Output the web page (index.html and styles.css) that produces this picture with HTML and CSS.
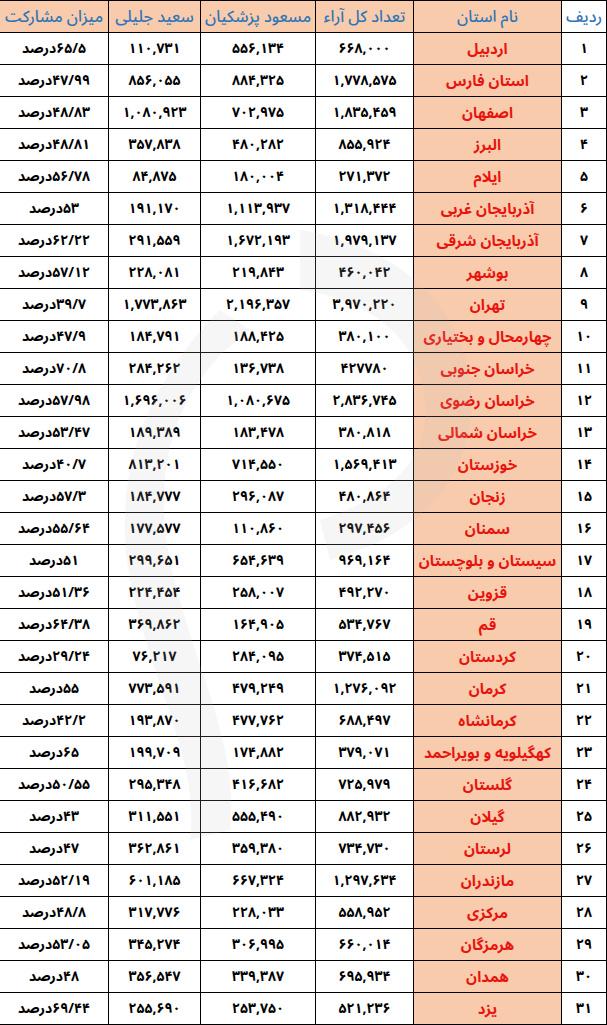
FILE: index.html
```html
<!DOCTYPE html>
<html lang="fa" dir="rtl">
<head>
<meta charset="utf-8">
<title>نتایج انتخابات به تفکیک استان</title>
<link rel="stylesheet" href="styles.css">
</head>
<body>
<div class="wrap">
<table class="results">
<colgroup>
<col class="c-idx"><col class="c-name"><col class="c-total"><col class="c-p"><col class="c-j"><col class="c-part">
</colgroup>
<thead>
<tr><th class="h-idx">ردیف</th><th>نام استان</th><th>تعداد کل آراء</th><th>مسعود پزشکیان</th><th>سعید جلیلی</th><th>میزان مشارکت</th></tr>
</thead>
<tbody>
<tr><td>۱</td><td class="name">اردبیل</td><td>۶۶۸,۰۰۰</td><td>۵۵۶,۱۳۴</td><td>۱۱۰,۷۳۱</td><td>۶۵/۵درصد</td></tr>
<tr><td>۲</td><td class="name">استان فارس</td><td>۱,۷۷۸,۵۷۵</td><td>۸۸۴,۳۲۵</td><td>۸۵۶,۰۵۵</td><td>۴۷/۹۹درصد</td></tr>
<tr><td>۳</td><td class="name">اصفهان</td><td>۱,۸۳۵,۴۵۹</td><td>۷۰۲,۹۷۵</td><td>۱,۰۸۰,۹۲۳</td><td>۴۸/۸۳درصد</td></tr>
<tr><td>۴</td><td class="name">البرز</td><td>۸۵۵,۹۲۴</td><td>۴۸۰,۲۸۲</td><td>۳۵۷,۸۳۸</td><td>۴۸/۸۱درصد</td></tr>
<tr><td>۵</td><td class="name">ایلام</td><td>۲۷۱,۳۷۲</td><td>۱۸۰,۰۰۴</td><td>۸۴,۸۷۵</td><td>۵۶/۷۸درصد</td></tr>
<tr><td>۶</td><td class="name">آذربایجان غربی</td><td>۱,۳۱۸,۴۴۴</td><td>۱,۱۱۳,۹۳۷</td><td>۱۹۱,۱۷۰</td><td>۵۳درصد</td></tr>
<tr><td>۷</td><td class="name">آذربایجان شرقی</td><td>۱,۹۷۹,۱۳۷</td><td>۱,۶۷۲,۱۹۳</td><td>۲۹۱,۵۵۹</td><td>۶۲/۲۲درصد</td></tr>
<tr><td>۸</td><td class="name">بوشهر</td><td>۴۶۰,۰۴۲</td><td>۲۱۹,۸۴۳</td><td>۲۲۸,۰۸۱</td><td>۵۷/۱۲درصد</td></tr>
<tr><td>۹</td><td class="name">تهران</td><td>۳,۹۷۰,۲۲۰</td><td>۲,۱۹۶,۳۵۷</td><td>۱,۷۷۳,۸۶۳</td><td>۳۹/۷درصد</td></tr>
<tr><td>۱۰</td><td class="name">چهارمحال و بختیاری</td><td>۳۸۰,۱۰۰</td><td>۱۸۸,۴۲۵</td><td>۱۸۴,۷۹۱</td><td>۴۷/۹درصد</td></tr>
<tr><td>۱۱</td><td class="name">خراسان جنوبی</td><td>۴۲۷۷۸۰</td><td>۱۳۶,۷۳۸</td><td>۲۸۴,۲۶۲</td><td>۷۰/۸درصد</td></tr>
<tr><td>۱۲</td><td class="name">خراسان رضوی</td><td>۲,۸۳۶,۷۴۵</td><td>۱,۰۸۰,۶۷۵</td><td>۱,۶۹۶,۰۰۶</td><td>۵۷/۹۸درصد</td></tr>
<tr><td>۱۳</td><td class="name">خراسان شمالی</td><td>۳۸۰,۸۱۸</td><td>۱۸۳,۴۷۸</td><td>۱۸۹,۳۸۹</td><td>۵۳/۴۷درصد</td></tr>
<tr><td>۱۴</td><td class="name">خوزستان</td><td>۱,۵۶۹,۴۱۳</td><td>۷۱۴,۵۵۰</td><td>۸۱۳,۲۰۱</td><td>۴۰/۷درصد</td></tr>
<tr><td>۱۵</td><td class="name">زنجان</td><td>۴۸۰,۸۶۴</td><td>۲۹۶,۰۸۷</td><td>۱۸۴,۷۷۷</td><td>۵۷/۳درصد</td></tr>
<tr><td>۱۶</td><td class="name">سمنان</td><td>۲۹۷,۴۵۶</td><td>۱۱۰,۸۶۰</td><td>۱۷۷,۵۷۷</td><td>۵۵/۶۴درصد</td></tr>
<tr><td>۱۷</td><td class="name">سیستان و بلوچستان</td><td>۹۶۹,۱۶۴</td><td>۶۵۴,۶۳۹</td><td>۲۹۹,۶۵۱</td><td>۵۱درصد</td></tr>
<tr><td>۱۸</td><td class="name">قزوین</td><td>۴۹۲,۲۷۰</td><td>۲۵۸,۰۰۷</td><td>۲۲۴,۴۵۴</td><td>۵۱/۳۶درصد</td></tr>
<tr><td>۱۹</td><td class="name">قم</td><td>۵۳۴,۷۶۷</td><td>۱۶۴,۹۰۵</td><td>۳۶۹,۸۶۲</td><td>۶۴/۳۸درصد</td></tr>
<tr><td>۲۰</td><td class="name">کردستان</td><td>۳۷۴,۵۱۵</td><td>۲۸۴,۰۹۵</td><td>۷۶,۲۱۷</td><td>۲۹/۲۴درصد</td></tr>
<tr><td>۲۱</td><td class="name">کرمان</td><td>۱,۲۷۶,۰۹۲</td><td>۴۷۹,۲۴۹</td><td>۷۷۳,۵۹۱</td><td>۵۵درصد</td></tr>
<tr><td>۲۲</td><td class="name">کرمانشاه</td><td>۶۸۸,۴۹۷</td><td>۴۷۷,۷۶۲</td><td>۱۹۳,۸۷۰</td><td>۴۲/۲درصد</td></tr>
<tr><td>۲۳</td><td class="name">کهگیلویه و بویراحمد</td><td>۳۷۹,۰۷۱</td><td>۱۷۴,۸۸۲</td><td>۱۹۹,۷۰۹</td><td>۶۵درصد</td></tr>
<tr><td>۲۴</td><td class="name">گلستان</td><td>۷۲۵,۹۷۹</td><td>۴۱۶,۶۸۲</td><td>۲۹۵,۳۴۸</td><td>۵۰/۵۵درصد</td></tr>
<tr><td>۲۵</td><td class="name">گیلان</td><td>۸۸۲,۹۳۲</td><td>۵۵۵,۴۹۰</td><td>۳۱۱,۵۵۱</td><td>۴۳درصد</td></tr>
<tr><td>۲۶</td><td class="name">لرستان</td><td>۷۳۴,۷۳۰</td><td>۳۵۹,۳۸۰</td><td>۳۶۲,۸۶۱</td><td>۴۷درصد</td></tr>
<tr><td>۲۷</td><td class="name">مازندران</td><td>۱,۲۹۷,۶۳۴</td><td>۶۶۷,۳۲۴</td><td>۶۰۱,۱۸۵</td><td>۵۲/۱۹درصد</td></tr>
<tr><td>۲۸</td><td class="name">مرکزی</td><td>۵۵۸,۹۵۲</td><td>۲۲۸,۰۳۳</td><td>۳۱۷,۷۷۶</td><td>۴۸/۸درصد</td></tr>
<tr><td>۲۹</td><td class="name">هرمزگان</td><td>۶۶۰,۰۱۴</td><td>۳۰۶,۹۹۵</td><td>۳۴۵,۲۷۴</td><td>۵۳/۰۵درصد</td></tr>
<tr><td>۳۰</td><td class="name">همدان</td><td>۶۹۵,۹۳۴</td><td>۳۳۹,۳۸۷</td><td>۳۵۶,۵۴۷</td><td>۴۸درصد</td></tr>
<tr><td>۳۱</td><td class="name">یزد</td><td>۵۲۱,۲۳۶</td><td>۲۵۳,۷۵۰</td><td>۲۵۵,۶۹۰</td><td>۶۹/۴۴درصد</td></tr>
</tbody>
</table>
<svg class="watermark" width="607" height="1025" viewBox="0 0 607 1025" aria-hidden="true">
<path d="M300 230 C 420 250 480 330 470 420 C 460 500 400 540 330 560 L 320 520 C 380 500 420 470 425 420 C 430 350 380 300 300 290 Z" />
<path d="M250 330 C 180 380 150 460 170 560 C 190 660 240 740 230 830 L 190 840 C 200 760 150 680 130 580 C 110 470 150 380 220 310 Z" />
</svg>
</div>
</body>
</html>
```
FILE: styles.css
```css
body {
  margin: 0;
  background: #ffffff;
  font-family: "Noto Sans Arabic", "DejaVu Sans", sans-serif;
}
.wrap {
  position: relative;
  width: 607px;
}
.results {
  direction: rtl;
  border-collapse: collapse;
  table-layout: fixed;
  width: 607px;
}
.c-idx { width: 45px; }
.c-name { width: 148px; }
.c-total { width: 98px; }
.c-p { width: 115px; }
.c-j { width: 92px; }
.c-part { width: 109px; }
.results tr {
  height: 32px;
}
.results th,
.results td {
  border: 1px solid #000;
  padding: 0;
  height: 31px;
  line-height: 20px;
  text-align: center;
  vertical-align: middle;
  font-weight: bold;
  white-space: nowrap;
  overflow: hidden;
}
.results th {
  background: #f8cbad;
  color: #2e75b6;
  font-size: 16px;
  font-weight: 500;
}
.results th.h-idx {
  background: #ffffff;
}
.results td {
  color: #000;
  font-size: 14px;
}
.results td.name {
  background: #f8cbad;
  color: #e8140e;
  font-size: 15px;
}
.watermark {
  position: absolute;
  left: 0;
  top: 0;
  pointer-events: none;
}
.watermark path {
  fill: rgba(190, 190, 190, 0.14);
}
```
